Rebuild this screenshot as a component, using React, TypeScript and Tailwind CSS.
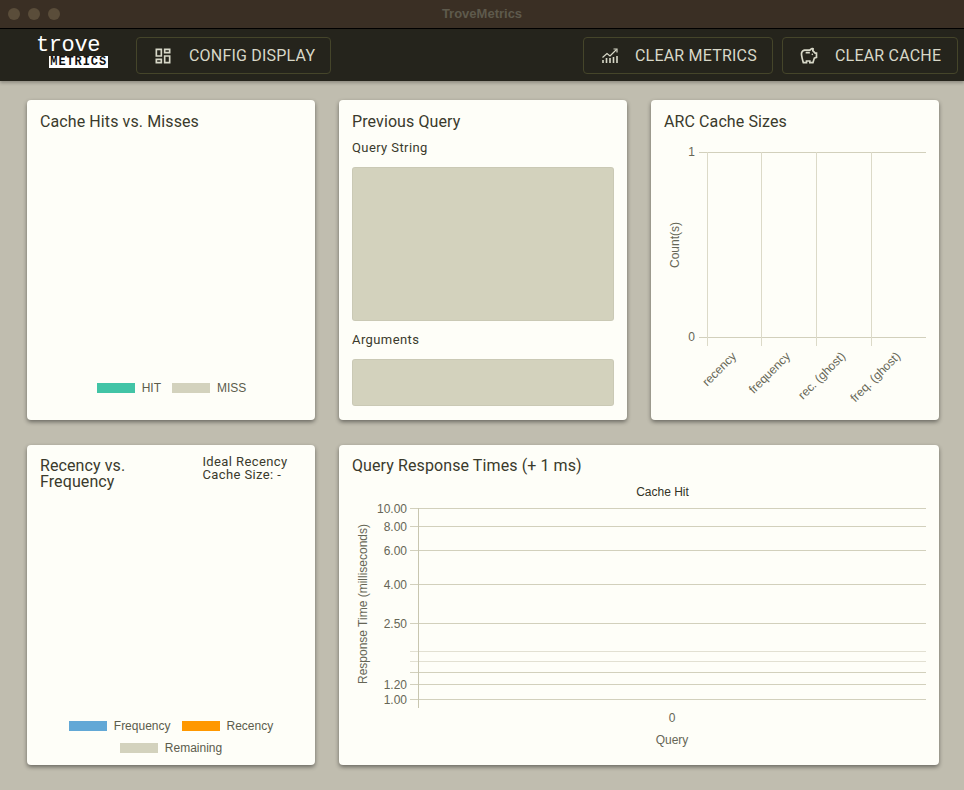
import { MdOutlineDashboard, MdOutlineSavings } from "react-icons/md";
import type { ReactNode } from "react";

const cardCls =
  "flex h-[320px] flex-col rounded-[4px] bg-[#fefef8] p-[13px] shadow-[0_2px_4px_rgba(0,0,0,0.45)]";
const titleCls = "text-[16px] leading-[16px] tracking-[0.1px] text-[#3a3a2c]";
const labelCls = "text-[13px] leading-[13px] tracking-[0.4px] text-[#3a3a2c]";
const blockCls = "rounded-[3px] bg-[#d3d2bd] shadow-[inset_0_0_0_1px_rgba(0,0,0,0.04)]";

function ChartLinesIcon() {
  return (
    <svg width="16" height="16" viewBox="0 0 16 16" fill="none" stroke="currentColor">
      <path d="M1 15v-3M4.500 15v-5M8 15v-5M11.500 15v-6M15 15V8" strokeWidth="1.600" />
      <path d="M0.500 9.500 5 5.500l3 2.500 6.500-6.500" strokeWidth="1.200" />
      <path d="M11.500 1h3.500v3.500" strokeWidth="1.200" />
    </svg>
  );
}

function HeaderButton({ icon, label, cls }: { icon: ReactNode; label: string; cls: string }) {
  return (
    <button
      className={
        "flex h-[37px] items-center rounded-[4px] border border-[#45452a] pt-px text-[16px] tracking-[0.2px] text-[#d8d8c8] " +
        cls
      }
    >
      {icon}
      <span>{label}</span>
    </button>
  );
}

function Legend({ color, label }: { color: string; label: string }) {
  return (
    <div className="flex items-center gap-[7px]">
      <span className={"block h-[10px] w-[38px] " + color} />
      <span className="font-['Liberation_Sans',sans-serif] text-[12px] leading-[14px] text-[#5c5c4c]">
        {label}
      </span>
    </div>
  );
}

function ArcChart() {
  const xs = [707.5, 761.5, 816.5, 871.5];
  const labels = [
    { text: "recency", x: 737, y: 357 },
    { text: "frequency", x: 791, y: 357 },
    { text: "rec. (ghost)", x: 846, y: 357 },
    { text: "freq. (ghost)", x: 901, y: 357 },
  ];
  return (
    <svg
      width="265"
      height="275"
      viewBox="664 135 265 275"
      className="mt-[5px] block shrink-0 font-['Liberation_Sans',sans-serif]"
    >
      {[152.5, 337.5].map((y) => (
        <line key={y} x1="699" x2="926" y1={y} y2={y} stroke="#d2d0bc" />
      ))}
      {xs.map((x) => (
        <line key={x} x1={x} x2={x} y1="152" y2="346" stroke="#dcdac8" />
      ))}
      <text x="695" y="156" textAnchor="end" fontSize="12" fill="#666656">1</text>
      <text x="695" y="341" textAnchor="end" fontSize="12" fill="#666656">0</text>
      <text
        transform="translate(679 245) rotate(-90)"
        textAnchor="middle"
        fontSize="12"
        fill="#666656"
      >
        Count(s)
      </text>
      {labels.map((l) => (
        <text
          key={l.text}
          transform={`translate(${l.x} ${l.y}) rotate(-45)`}
          textAnchor="end"
          fontSize="12"
          fill="#666656"
        >
          {l.text}
        </text>
      ))}
    </svg>
  );
}

function ResponseChart() {
  const ticks = [
    { y: 508.5, label: "10.00" },
    { y: 526.5, label: "8.00" },
    { y: 550.5, label: "6.00" },
    { y: 584.5, label: "4.00" },
    { y: 623.5, label: "2.50" },
    { y: 651.5 },
    { y: 661.5 },
    { y: 672.5 },
    { y: 684.5, label: "1.20" },
    { y: 699.5, label: "1.00" },
  ];
  return (
    <svg
      width="575"
      height="270"
      viewBox="352 480 575 270"
      className="mt-[6px] block shrink-0 font-['Liberation_Sans',sans-serif]"
    >
      <text x="662.5" y="496" textAnchor="middle" fontSize="12" fill="#333326">Cache Hit</text>
      {ticks.map((t) => (
        <line
          key={t.y}
          x1="410"
          x2="926"
          y1={t.y}
          y2={t.y}
          stroke={t.label || t.y === 672.5 ? "#d2d0bc" : "#e2e0d2"}
        />
      ))}
      <line x1="418.5" x2="418.5" y1="508" y2="708" stroke="#c8c6b0" />
      {ticks.map((t) =>
        t.label ? (
          <text key={t.label} x="407" y={t.y + 4} textAnchor="end" fontSize="12" fill="#666656">
            {t.label}
          </text>
        ) : null,
      )}
      <text
        transform="translate(367 604) rotate(-90)"
        textAnchor="middle"
        fontSize="12"
        fill="#666656"
      >
        Response Time (milliseconds)
      </text>
      <text x="672" y="722" textAnchor="middle" fontSize="12" fill="#666656">0</text>
      <text x="672" y="744" textAnchor="middle" fontSize="12" fill="#666656">Query</text>
    </svg>
  );
}

export default function App() {
  return (
    <div className="flex h-[790px] w-[964px] flex-col overflow-hidden bg-[#c0bdaf] font-['Roboto',sans-serif]">
      {/* window chrome */}
      <div className="relative flex h-[29px] items-center gap-[8px] border-b border-black bg-[#3a2f24] pl-[8px]">
        <span className="block h-[12px] w-[12px] rounded-full bg-[#5a4d3a]" />
        <span className="block h-[12px] w-[12px] rounded-full bg-[#5a4d3a]" />
        <span className="block h-[12px] w-[12px] rounded-full bg-[#5a4d3a]" />
        <span className="absolute inset-x-0 text-center font-['Liberation_Sans',sans-serif] text-[13px] font-bold text-[#5e5a4c]">
          TroveMetrics
        </span>
      </div>

      {/* toolbar */}
      <div className="flex h-[52px] items-center bg-[#25241c] pr-[6px] pl-[36px] shadow-[0_2px_3px_rgba(0,0,0,0.25)]">
        <div className="mr-[28px] mb-[9px] flex w-[72px] flex-col items-end">
          <span className="self-start font-['Liberation_Mono',monospace] text-[22px] leading-[23px] tracking-[-0.4px] text-white">
            trove
          </span>
          <span className="-mt-px bg-white px-px font-['Liberation_Mono',monospace] text-[12px] leading-[12px] font-bold tracking-[0.9px] text-[#111]">
            METRICS
          </span>
        </div>
        <HeaderButton
          cls="w-[195px] pl-[16px]"
          label="CONFIG DISPLAY"
          icon={<MdOutlineDashboard className="mr-[16px] text-[20px]" />}
        />
        <div className="ml-auto flex gap-[9px]">
          <HeaderButton
            cls="w-[190px] pl-[18px]"
            label="CLEAR METRICS"
            icon={
              <span className="mr-[17px]">
                <ChartLinesIcon />
              </span>
            }
          />
          <HeaderButton
            cls="w-[176px] pl-[16px]"
            label="CLEAR CACHE"
            icon={<MdOutlineSavings className="mr-[16px] text-[20px]" />}
          />
        </div>
      </div>

      {/* dashboard cards */}
      <div className="grid grid-cols-[288px_288px_288px] gap-x-[24px] gap-y-[25px] pt-[19px] pl-[27px]">
        <div className={cardCls + " pt-[14px]"}>
          <h2 className={titleCls}>Cache Hits vs. Misses</h2>
          <div className="mt-auto mb-[12px] flex justify-center gap-[11px] pl-[1px]">
            <Legend color="bg-[#42c4a6]" label="HIT" />
            <Legend color="bg-[#d3d2bd]" label="MISS" />
          </div>
        </div>

        <div className={cardCls + " pt-[14px]"}>
          <h2 className={titleCls}>Previous Query</h2>
          <p className={labelCls + " mt-[11px]"}>Query String</p>
          <div className={blockCls + " mt-[13px] h-[154px]"} />
          <p className={labelCls + " mt-[12px]"}>Arguments</p>
          <div className={blockCls + " mt-[13px] h-[47px]"} />
        </div>

        <div className={cardCls + " pt-[14px]"}>
          <h2 className={titleCls}>ARC Cache Sizes</h2>
          <ArcChart />
        </div>

        <div className={cardCls}>
          <div className="flex">
            <h2 className={titleCls + " w-[163px]"}>Recency vs. Frequency</h2>
            <p className={labelCls + " -mt-[3px] w-[100px]"}>Ideal Recency Cache Size: -</p>
          </div>
          <div className="-mb-[3px] mt-auto flex flex-col items-center gap-[8px]">
            <div className="flex gap-[11px]">
              <Legend color="bg-[#62a8d6]" label="Frequency" />
              <Legend color="bg-[#ff9800]" label="Recency" />
            </div>
            <Legend color="bg-[#d3d2bd]" label="Remaining" />
          </div>
        </div>

        <div className={cardCls + " col-span-2"}>
          <h2 className={titleCls}>Query Response Times (+ 1 ms)</h2>
          <ResponseChart />
        </div>
      </div>
    </div>
  );
}
